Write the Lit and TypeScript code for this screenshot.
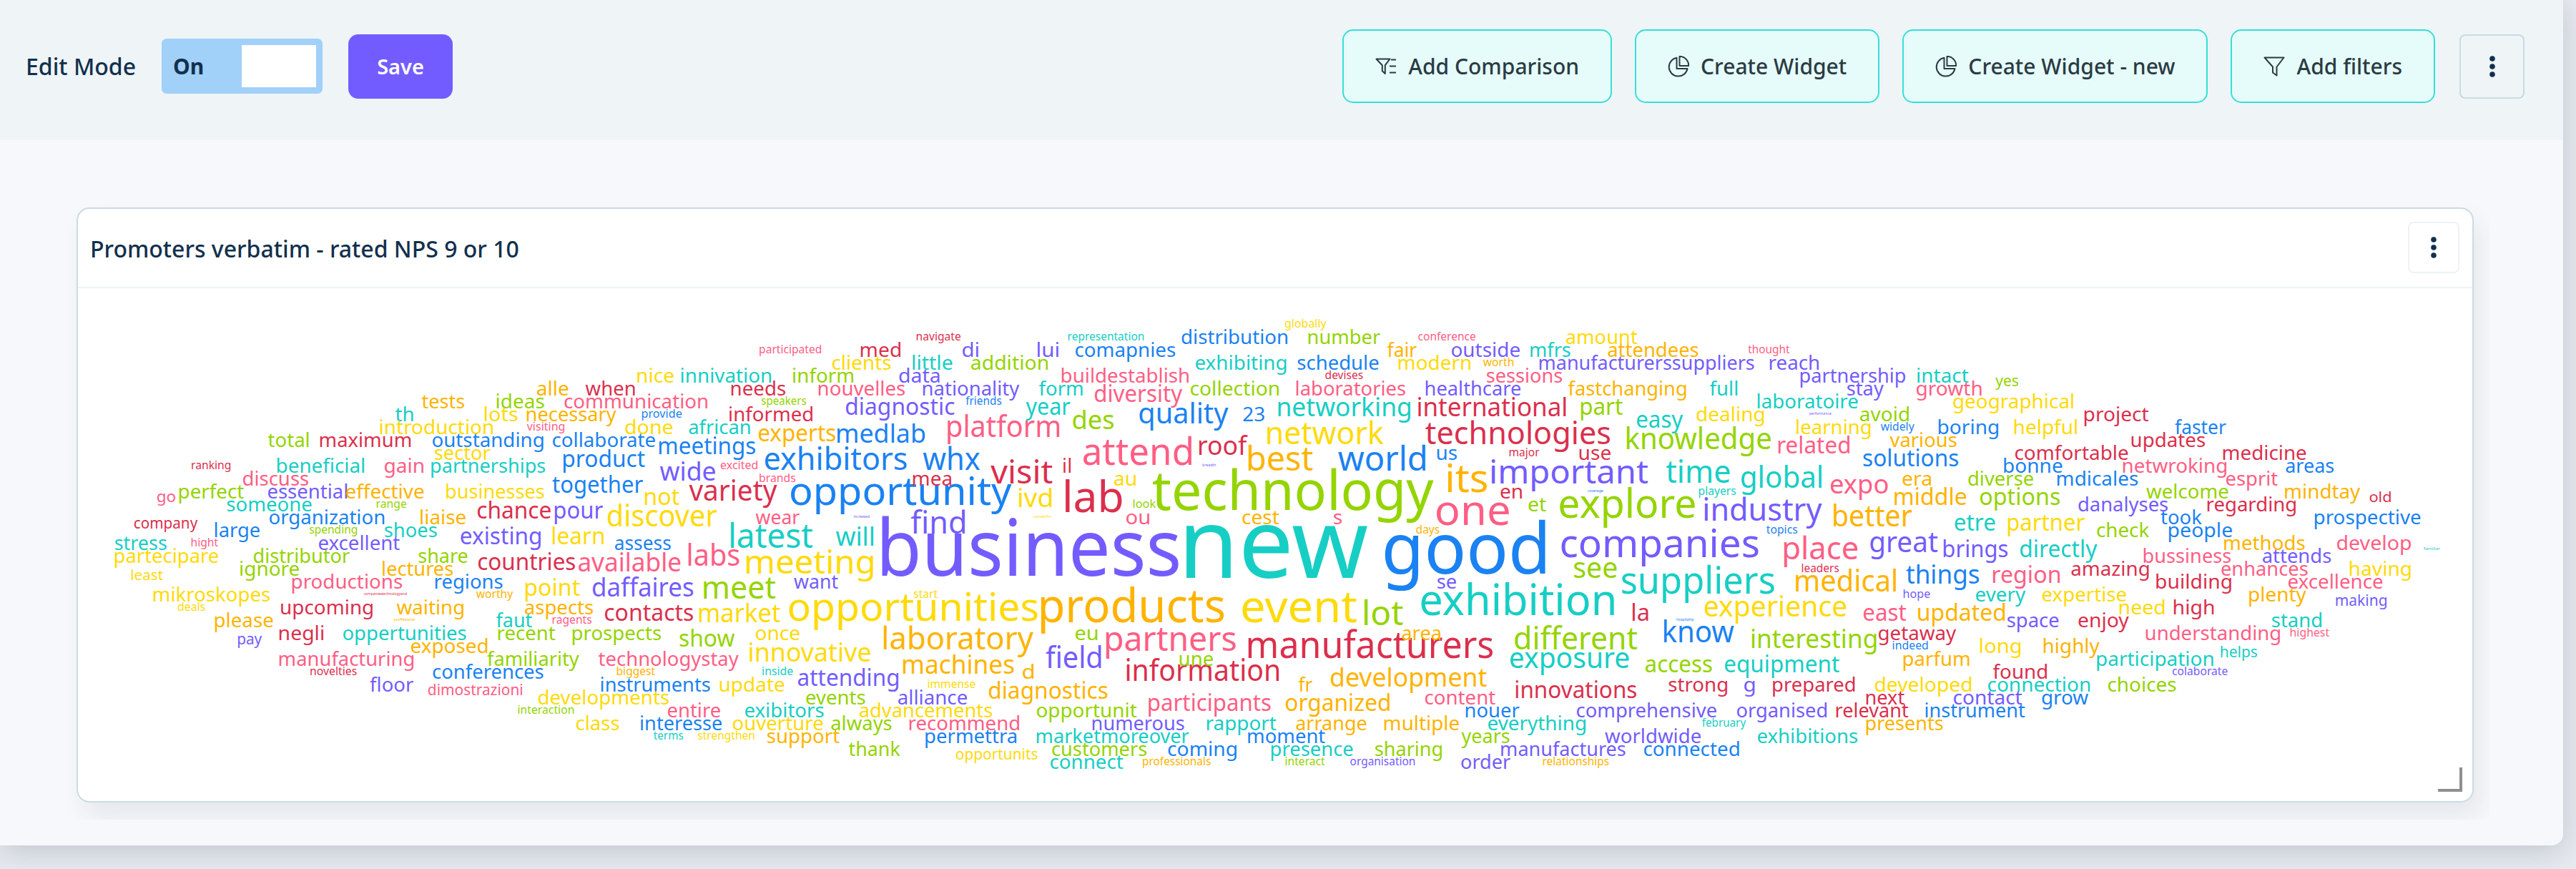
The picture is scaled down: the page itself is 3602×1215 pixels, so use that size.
import { LitElement, css, html, svg } from "lit";
import { customElement, property } from "lit/decorators.js";

// text, left edge, right edge, baseline, font size, colour key
type Word = [string, number, number, number, number, string];

const COLORS: Record<string, string> = {
  p: '#735cff',
  k: '#ff5e85',
  t: '#17cec4',
  y: '#ffda0a',
  o: '#ffb300',
  g: '#94d400',
  b: '#1a82f2',
  r: '#db2f4d',
};

const WORDS: Word[] = [
  ['new', 1659, 1912, 807.5, 135, 't'],
  ['business', 1234, 1647.5, 805.3, 109, 'p'],
  ['good', 1937, 2161, 801.7, 98, 'b'],
  ['technology', 1612, 2004, 713.3, 77, 'g'],
  ['products', 1456, 1711, 870.3, 66, 'o'],
  ['event', 1737.5, 1897.5, 870.3, 62, 'y'],
  ['exhibition', 1987.5, 2256.5, 860.3, 61, 't'],
  ['lab', 1490, 1568.5, 716, 60, 'r'],
  ['one', 2009, 2110, 734, 58, 'k'],
  ['explore', 2181.5, 2370, 724.3, 57, 'g'],
  ['opportunity', 1106, 1414, 706.3, 55, 'b'],
  ['opportunities', 1103.5, 1450.5, 868.3, 55, 'y'],
  ['its', 2025, 2079, 688.3, 55, 'o'],
  ['companies', 2183.5, 2458.5, 778.7, 55, 'p'],
  ['attend', 1515, 1666, 650.3, 52, 'k'],
  ['manufacturers', 1746, 2087, 920.3, 52, 'r'],
  ['suppliers', 2268, 2480.5, 830.3, 52, 't'],
  ['latest', 1022, 1136.5, 766.3, 48, 't'],
  ['best', 1746, 1836, 658.3, 48, 'o'],
  ['world', 1871.5, 1993, 658.3, 48, 'b'],
  ['lot', 1908, 1962, 874, 48, 'g'],
  ['partners', 1547, 1727.5, 910.3, 48, 'k'],
  ['visit', 1386, 1472, 676, 46, 'r'],
  ['important', 2086, 2304.5, 676, 46, 'p'],
  ['meeting', 1044, 1221, 802.3, 46, 'y'],
  ['network', 1772.5, 1934.5, 620.7, 44, 'y'],
  ['technologies', 1993.5, 2251, 620.7, 44, 'r'],
  ['exhibitors', 1070, 1267.5, 656.5, 44, 'b'],
  ['whx', 1291, 1370.5, 656.5, 44, 'b'],
  ['find', 1274, 1349, 746.3, 44, 'p'],
  ['laboratory', 1236, 1444.5, 908.3, 44, 'o'],
  ['different', 2118.5, 2289.5, 908.3, 44, 'g'],
  ['time', 2330, 2418.5, 674.7, 44, 't'],
  ['industry', 2384, 2547, 728.3, 44, 'p'],
  ['place', 2495, 2597.5, 782.3, 44, 'k'],
  ['meet', 984.5, 1084.5, 836.7, 44, 'g'],
  ['platform', 1325.5, 1481, 610.5, 41, 'k'],
  ['quality', 1593.5, 1717, 592.3, 40, 'b'],
  ['discover', 850, 1002.5, 736.3, 41, 'y'],
  ['labs', 963, 1033.5, 790.7, 41, 'k'],
  ['field', 1462.5, 1539.5, 934.3, 41, 'p'],
  ['information', 1576, 1788, 952.3, 41, 'r'],
  ['knowledge', 2275, 2476, 628.3, 41, 'g'],
  ['global', 2435, 2547, 682.3, 41, 't'],
  ['better', 2564.5, 2673.5, 736.3, 41, 'o'],
  ['medical', 2511.5, 2651, 826.7, 41, 'o'],
  ['know', 2327, 2424.5, 898.3, 41, 'b'],
  ['variety', 964, 1086, 700.3, 40, 'r'],
  ['exposure', 2112, 2277.5, 934.3, 40, 't'],
  ['great', 2615.5, 2709.5, 772.3, 40, 'p'],
  ['see', 2201, 2260.5, 808.3, 40, 'g'],
  ['experience', 2384, 2581.5, 862.3, 40, 'y'],
  ['will', 1169, 1221, 762.7, 37, 't'],
  ['available', 809, 951.5, 799, 36, 'k'],
  ['daffaires', 829, 969, 834, 36, 'p'],
  ['medlab', 1171, 1293, 619, 36, 'b'],
  ['wide', 923, 1000, 672.3, 36, 'p'],
  ['ivd', 1425, 1470.5, 708.5, 36, 'y'],
  ['market', 978, 1091, 870, 36, 'y'],
  ['innovative', 1048.5, 1217, 924.7, 36, 'y'],
  ['machines', 1263, 1417.5, 942.3, 36, 'o'],
  ['networking', 1787.5, 1972, 582.3, 36, 't'],
  ['international', 1983.5, 2189.5, 582.3, 36, 'r'],
  ['des', 1500.5, 1557, 600.3, 36, 'g'],
  ['roof', 1677, 1743, 636, 36, 'r'],
  ['development', 1861, 2079, 960.3, 36, 'o'],
  ['expo', 2560, 2639.5, 690.3, 36, 'k'],
  ['things', 2665.5, 2767, 816.3, 36, 'b'],
  ['interesting', 2450, 2623.5, 906.3, 36, 'g'],

  ['product', 788, 902, 652.5, 32, 'b'],
  ['together', 772.5, 899, 688.5, 32, 'b'],
  ['chance', 668, 770, 724.5, 32, 'r'],
  ['pour', 776, 843, 724.5, 32, 'p'],
  ['existing', 644.5, 756, 760.7, 32, 'p'],
  ['learn', 773, 844, 760.7, 32, 'y'],
  ['countries', 669, 804, 796.5, 32, 'r'],
  ['point', 735, 811, 832.7, 32, 'y'],
  ['diagnostic', 1183, 1334, 580.3, 32, 'p'],
  ['year', 1435, 1496.5, 580.3, 32, 't'],
  ['experts', 1061, 1168, 616.7, 32, 'o'],
  ['meetings', 922, 1056, 634.5, 32, 'b'],
  ['not', 902, 950, 706.3, 32, 'y'],
  ['contacts', 846, 969, 868.3, 32, 'r'],
  ['show', 950.5, 1027, 904.3, 32, 'g'],
  ['attending', 1116, 1256, 958.5, 32, 'p'],
  ['diagnostics', 1383, 1548.5, 976.5, 32, 'o'],
  ['diversity', 1531, 1653, 562.3, 32, 'k'],
  ['part', 2211, 2269, 580.3, 32, 'g'],
  ['participants', 1606.5, 1776.5, 994.3, 32, 'k'],
  ['organized', 1798, 1943, 994.3, 32, 'o'],
  ['innovations', 2120, 2288, 976.3, 32, 'r'],
  ['easy', 2289, 2353, 598.3, 32, 't'],
  ['related', 2487, 2586, 634.3, 32, 'k'],
  ['solutions', 2605.5, 2738, 652.3, 32, 'b'],
  ['middle', 2649.5, 2749.5, 706.3, 32, 'o'],
  ['options', 2769, 2880, 706.3, 32, 'g'],
  ['etre', 2733.5, 2789.5, 742.3, 32, 't'],
  ['partner', 2808, 2915, 742.3, 32, 'y'],
  ['brings', 2718, 2807, 778.7, 32, 'p'],
  ['directly', 2825, 2932, 778.7, 32, 't'],
  ['region', 2787, 2880, 814.5, 32, 'k'],
  ['la', 2283, 2304.5, 868.3, 32, 'r'],
  ['east', 2606, 2665.5, 868.3, 32, 'k'],
  ['updated', 2682.5, 2803.5, 868.3, 32, 'o'],
  ['access', 2301, 2393.5, 940.3, 32, 'g'],
  ['equipment', 2412, 2572, 940.3, 32, 't'],

  ['distribution', 1652.5, 1800, 481, 28, 'b'],
  ['number', 1830, 1930, 481, 28, 'g'],
  ['amount', 2190, 2289.5, 481, 28, 'y'],

  ['med', 1204, 1259, 499, 28, 'r'],
  ['di', 1346, 1368, 499, 28, 'p'],
  ['lui', 1451, 1480, 499, 28, 'p'],
  ['comapnies', 1504, 1643, 499, 28, 'b'],
  ['fair', 1940, 1981, 499, 28, 'o'],
  ['outside', 2030, 2125, 499, 28, 'p'],
  ['mfrs', 2140.5, 2195.5, 499, 28, 't'],
  ['attendees', 2248.5, 2374.5, 499, 28, 'o'],

  ['clients', 1164, 1245.5, 517, 28, 'y'],
  ['little', 1276.5, 1331.5, 517, 28, 't'],
  ['addition', 1358, 1465, 517, 28, 'g'],
  ['exhibiting', 1672, 1798.5, 517, 28, 't'],
  ['schedule', 1814.5, 1927.5, 517, 28, 'b'],
  ['modern', 1956, 2056, 517, 28, 'y'],
  ['manufacturerssuppliers', 2153, 2452.5, 517, 28, 'p'],
  ['reach', 2475, 2543, 517, 28, 'p'],

  ['nice', 891.5, 942, 535, 28, 'y'],
  ['innivation', 953, 1078, 535, 28, 't'],
  ['inform', 1109.5, 1193, 535, 28, 'g'],
  ['data', 1257.5, 1313.5, 535, 28, 'p'],
  ['buildestablish', 1485, 1662, 535, 28, 'k'],
  ['sessions', 2079, 2184, 535, 28, 'k'],
  ['partnership', 2518, 2664, 535, 28, 'p'],
  ['intact', 2681.5, 2752.5, 535, 28, 't'],

  ['alle', 751, 794.5, 553, 28, 'o'],
  ['when', 819, 887.5, 553, 28, 'r'],
  ['needs', 1023, 1098, 553, 28, 'r'],
  ['nouvelles', 1145, 1265, 553, 28, 'k'],
  ['nationality', 1291, 1425, 553, 28, 'p'],
  ['form', 1453, 1513.5, 553, 28, 't'],
  ['collection', 1665, 1788, 553, 28, 'g'],
  ['laboratories', 1813, 1965, 553, 28, 'k'],
  ['healthcare', 1994, 2126, 553, 28, 'p'],
  ['fastchanging', 2193, 2357.5, 553, 28, 'o'],
  ['full', 2391, 2429, 553, 28, 't'],
  ['stay', 2583, 2633.5, 553, 28, 'p'],
  ['growth', 2680, 2770.5, 553, 28, 'k'],

  ['tests', 590, 649, 571, 28, 'o'],
  ['ideas', 695, 760.5, 571, 28, 'g'],
  ['communication', 789.5, 989, 571, 28, 'k'],
  ['laboratoire', 2458, 2597.5, 571, 28, 't'],
  ['geographical', 2731.5, 2899, 571, 28, 'y'],

  ['th', 553, 577.5, 589, 28, 't'],
  ['lots', 678, 723.5, 589, 28, 'y'],
  ['necessary', 737, 861.5, 589, 28, 'o'],
  ['informed', 1020.5, 1136, 589, 28, 'r'],
  ['23', 1738.5, 1768, 589, 28, 'b'],
  ['dealing', 2372.5, 2466.5, 589, 28, 'y'],
  ['avoid', 2601, 2669, 589, 28, 'g'],
  ['project', 2915, 3004.5, 589, 28, 'r'],

  ['introduction', 532, 689, 607, 28, 'y'],
  ['done', 874.5, 940.5, 607, 28, 'y'],
  ['african', 963.5, 1048.5, 607, 28, 't'],
  ['learning', 2512.5, 2615.5, 607, 28, 'y'],
  ['boring', 2711, 2794, 607, 28, 'b'],
  ['helpful', 2817, 2904, 607, 28, 'y'],
  ['faster', 3041.5, 3112.5, 607, 28, 'b'],

  ['total', 375, 431.5, 625, 28, 'g'],
  ['maximum', 448, 574, 625, 28, 'r'],
  ['outstanding', 605, 759.5, 625, 28, 'b'],
  ['collaborate', 773, 916, 625, 28, 'b'],
  ['various', 2643, 2735.5, 625, 28, 'o'],
  ['updates', 2981, 3083, 625, 28, 'r'],

  ['sector', 608, 685.5, 643, 28, 'y'],
  ['us', 2010, 2037, 643, 28, 'b'],
  ['use', 2209, 2252, 643, 28, 'r'],
  ['comfortable', 2818, 2975.5, 643, 28, 'r'],
  ['medicine', 3109, 3224.5, 643, 28, 'r'],

  ['beneficial', 388, 509, 661, 28, 't'],
  ['gain', 538, 592, 661, 28, 'k'],
  ['partnerships', 603.5, 762, 661, 28, 't'],
  ['il', 1487.5, 1497, 660.5, 28, 'r'],
  ['bonne', 2802.5, 2883.5, 661, 28, 'b'],
  ['netwroking', 2969, 3113, 661, 28, 'k'],
  ['areas', 3196.5, 3263, 661, 28, 'b'],

  ['discuss', 340, 431, 679, 28, 'k'],
  ['mea', 1277, 1330, 679, 28, 'r'],
  ['au', 1558, 1588, 679, 28, 'y'],
  ['era', 2660.5, 2700, 679, 28, 'o'],
  ['diverse', 2752.5, 2843, 679, 28, 'g'],
  ['mdicales', 2877, 2989, 679, 28, 'b'],
  ['esprit', 3113, 3185, 679, 28, 'k'],

  ['perfect', 251, 341, 697, 28, 'g'],
  ['essential', 375, 485, 697, 28, 'p'],
  ['effective', 484, 592.5, 697, 28, 'o'],
  ['businesses', 624.5, 760.5, 697, 28, 'y'],
  ['en', 2098.5, 2128, 697, 28, 'r'],
  ['welcome', 3001.5, 3115.5, 697, 28, 'g'],
  ['mindtay', 3195.5, 3300, 697, 28, 'o'],

  ['someone', 317.5, 435.5, 715, 28, 't'],
  ['et', 2137.5, 2162, 715, 28, 'g'],
  ['danalyses', 2906.5, 3031, 715, 28, 'p'],
  ['regarding', 3087, 3210, 715, 28, 'r'],

  ['organization', 377, 537, 733, 28, 'b'],
  ['liaise', 588.5, 651, 733, 28, 'o'],
  ['wear', 1057, 1118, 733, 28, 'k'],
  ['ou', 1575, 1607, 733, 28, 'k'],
  ['cest', 1737.5, 1788.5, 733, 28, 'o'],
  ['s', 1865, 1876, 733, 28, 'k'],
  ['took', 3021.5, 3078.5, 733, 28, 'b'],
  ['prospective', 3237, 3384.5, 733, 28, 'b'],

  ['large', 301, 363, 751, 28, 'b'],
  ['shoes', 538, 610.5, 751, 28, 't'],
  ['check', 2932.5, 3005, 751, 28, 'g'],
  ['people', 3033, 3121, 751, 28, 'b'],

  ['stress', 161, 232.5, 769, 28, 't'],
  ['excellent', 446, 559, 769, 28, 'p'],
  ['assess', 860, 937.5, 769, 28, 'b'],
  ['methods', 3110.5, 3222.5, 769, 28, 'o'],
  ['develop', 3268, 3371, 769, 28, 'k'],

  ['partecipare', 161, 305, 787, 28, 'y'],
  ['distributor', 355, 489, 787, 28, 'g'],
  ['share', 585.5, 653.5, 787, 28, 'g'],
  ['bussiness', 2998, 3119, 787, 28, 'k'],
  ['attends', 3164, 3259, 787, 28, 'p'],

  ['ignore', 336.5, 418, 805, 28, 'g'],
  ['lectures', 535.5, 633, 805, 28, 'o'],
  ['amazing', 2896.5, 3004.5, 805, 28, 'r'],
  ['enhances', 3106.5, 3226.5, 805, 28, 'k'],
  ['having', 3286, 3371, 805, 28, 'y'],

  ['productions', 409, 562, 823, 28, 'k'],
  ['regions', 609, 702.5, 823, 28, 'b'],
  ['want', 1110.5, 1172, 823, 28, 'p'],
  ['se', 2010, 2036, 823, 28, 'p'],
  ['building', 3015.5, 3120, 823, 28, 'r'],
  ['excellence', 3200, 3331.5, 823, 28, 'k'],

  ['mikroskopes', 215, 377, 841, 28, 'y'],
  ['every', 2763, 2832, 841, 28, 't'],
  ['expertise', 2856, 2973, 841, 28, 'y'],
  ['plenty', 3145.5, 3224.5, 841, 28, 'o'],

  ['upcoming', 393.5, 521, 859, 28, 'r'],
  ['waiting', 555, 648, 859, 28, 'o'],
  ['aspects', 734, 829, 859, 28, 'o'],
  ['need', 2964, 3026.5, 859, 28, 'y'],
  ['high', 3040, 3095.5, 859, 28, 'r'],

  ['please', 301, 381.5, 877, 28, 'o'],
  ['faut', 694, 744, 877, 28, 't'],
  ['space', 2807, 2878.5, 877, 28, 'p'],
  ['enjoy', 2906.5, 2976.5, 877, 28, 'r'],
  ['stand', 3177, 3246, 877, 28, 't'],

  ['negli', 391, 452, 895, 28, 'r'],
  ['oppertunities', 480, 651.5, 895, 28, 't'],
  ['recent', 697, 776.5, 895, 28, 'g'],
  ['prospects', 801, 924, 895, 28, 'g'],
  ['once', 1057, 1118, 895, 28, 'y'],
  ['eu', 1504, 1534.5, 895, 28, 'g'],
  ['area', 1960.5, 2014, 895, 28, 'o'],
  ['getaway', 2627, 2735, 895, 28, 'r'],
  ['understanding', 3001, 3188, 895, 28, 'k'],

  ['exposed', 575, 681.5, 913, 28, 'o'],
  ['long', 2769, 2825.5, 913, 28, 'y'],
  ['highly', 2858, 2935.5, 913, 28, 'o'],

  ['manufacturing', 391, 578, 931, 28, 'k'],
  ['familiarity', 681.5, 809.5, 931, 28, 'g'],
  ['technologystay', 837, 1032.5, 931, 28, 'k'],
  ['une', 1650, 1696, 931, 28, 'g'],
  ['parfum', 2662, 2753.5, 931, 28, 'o'],
  ['participation', 2932.5, 3094.5, 931, 28, 't'],

  ['conferences', 605.5, 759.5, 949, 28, 'b'],
  ['d', 1430, 1445.5, 949, 28, 'o'],
  ['found', 2787, 2862, 949, 28, 'r'],

  ['floor', 517.5, 578, 967, 28, 'p'],
  ['instruments', 841, 992.5, 967, 28, 'b'],
  ['update', 1007, 1096.5, 967, 28, 'y'],
  ['fr', 1816, 1835, 967, 28, 'o'],
  ['strong', 2333.5, 2415, 967, 28, 'r'],
  ['g', 2439, 2453.5, 967, 28, 'p'],
  ['prepared', 2479.5, 2593.5, 967, 28, 'r'],
  ['developed', 2622, 2756.5, 967, 28, 'y'],
  ['connection', 2780, 2922, 967, 28, 't'],
  ['choices', 2948, 3042.5, 967, 28, 'g'],

  ['developments', 753, 935, 985, 28, 'y'],
  ['events', 1127.5, 1209.5, 985, 28, 'g'],
  ['alliance', 1256, 1352, 985, 28, 'p'],
  ['content', 1993, 2091, 985, 28, 'k'],
  ['next', 2610, 2663, 985, 28, 'r'],
  ['contact', 2732, 2827.5, 985, 28, 'p'],
  ['grow', 2855.5, 2920, 985, 28, 'b'],

  ['entire', 934, 1007, 1003, 28, 'k'],
  ['exibitors', 1042, 1151.5, 1003, 28, 't'],
  ['advancements', 1202, 1387, 1003, 28, 'y'],
  ['opportunit', 1450, 1589.5, 1003, 28, 'g'],
  ['nouer', 2050, 2124.5, 1003, 28, 'b'],
  ['comprehensive', 2205, 2400, 1003, 28, 'p'],
  ['organised', 2429, 2554, 1003, 28, 'p'],
  ['relevant', 2568, 2668.5, 1003, 28, 'r'],
  ['instrument', 2693, 2831.5, 1003, 28, 'b'],

  ['class', 806, 865.5, 1021, 28, 'y'],
  ['interesse', 896.5, 1009, 1021, 28, 'b'],
  ['ouverture', 1025, 1150.5, 1021, 28, 'y'],
  ['always', 1162.5, 1246.5, 1021, 28, 'g'],
  ['recommend', 1272, 1425, 1021, 28, 'k'],
  ['numerous', 1528, 1655.5, 1021, 28, 'p'],
  ['rapport', 1688, 1784.5, 1021, 28, 't'],
  ['arrange', 1812.5, 1910.5, 1021, 28, 'o'],
  ['multiple', 1936, 2040, 1021, 28, 'o'],
  ['everything', 2081, 2217, 1021, 28, 't'],
  ['presents', 2610, 2716.5, 1021, 28, 'o'],

  ['support', 1073, 1174, 1039, 28, 'o'],
  ['permettra', 1294.5, 1421, 1039, 28, 'b'],
  ['marketmoreover', 1450, 1662.5, 1039, 28, 't'],
  ['moment', 1745.5, 1853, 1039, 28, 'b'],
  ['years', 2044, 2110.5, 1039, 28, 'g'],
  ['worldwide', 2244.5, 2378, 1039, 28, 'p'],
  ['exhibitions', 2458, 2597, 1039, 28, 't'],

  ['thank', 1187, 1258.5, 1057, 28, 'g'],
  ['customers', 1471.5, 1603, 1057, 28, 'g'],
  ['coming', 1633.5, 1729, 1057, 28, 'b'],
  ['presence', 1778, 1891.5, 1057, 28, 't'],
  ['sharing', 1923, 2016, 1057, 28, 'g'],
  ['manufactures', 2099.5, 2272.5, 1057, 28, 'p'],
  ['connected', 2299, 2431.5, 1057, 28, 'b'],

  ['connect', 1469, 1570.5, 1075, 28, 't'],
  ['order', 2043.5, 2112, 1075, 28, 'p'],

  ['yes', 2790.5, 2822, 540.3, 22, 'g'],
  ['go', 220, 245, 702.3, 22, 'k'],
  ['company', 188, 276, 738.7, 22, 'r'],
  ['least', 184, 228, 810.5, 20, 'y'],
  ['pay', 333, 366, 901, 22, 'p'],
  ['dimostrazioni', 599, 730, 972.3, 21, 'k'],
  ['opportunits', 1337, 1450.5, 1062.3, 21, 'y'],
  ['old', 3313.5, 3343, 702.3, 20, 'r'],
  ['making', 3266.5, 3337, 847, 21, 'p'],
  ['helps', 3105.5, 3156, 919, 21, 't'],

  ['globally', 1797, 1854.5, 457.7, 17, 'y'],
  ['navigate', 1282, 1343, 475.7, 17, 'r'],
  ['representation', 1494, 1599, 475.7, 17, 't'],
  ['conference', 1983.5, 2063, 475.7, 17, 'k'],
  ['participated', 1062.5, 1148, 493.7, 17, 'k'],
  ['thought', 2444.5, 2502.5, 493.7, 17, 'k'],
  ['worth', 2074, 2116, 511.7, 17, 'o'],
  ['devises', 1853.5, 1905.5, 529.7, 17, 'r'],
  ['speakers', 1065, 1127, 565.7, 17, 'g'],
  ['friends', 1350.5, 1400, 565.7, 17, 'b'],
  ['provide', 898, 953, 583.7, 17, 'b'],
  ['visiting', 737, 789, 601.7, 17, 'k'],
  ['widely', 2630, 2676.5, 601.7, 17, 'b'],
  ['major', 2111, 2152.5, 637.7, 17, 'r'],
  ['ranking', 268.5, 322, 656, 17, 'r'],
  ['excited', 1008, 1059, 655.7, 17, 'k'],
  ['brands', 1062.5, 1112, 673.7, 17, 'k'],
  ['players', 2376, 2427, 691.7, 17, 't'],
  ['range', 527, 568, 709.7, 17, 'g'],
  ['look', 1585, 1616, 709.5, 17, 'g'],
  ['spending', 433, 499, 745.7, 17, 'g'],
  ['days', 1980.5, 2012.5, 745.5, 17, 'o'],
  ['topics', 2470, 2513, 745.7, 17, 'b'],
  ['hight', 268, 305, 763.7, 17, 'k'],
  ['leaders', 2520, 2571, 799.5, 17, 'r'],
  ['worthy', 666, 717, 835.7, 17, 'o'],
  ['start', 1278, 1311, 835.7, 17, 'y'],
  ['hope', 2662, 2698.5, 835.7, 17, 'p'],
  ['deals', 249, 286.5, 853.7, 17, 'y'],
  ['ragents', 773, 827, 871.7, 17, 'k'],
  ['highest', 3203, 3257, 889.7, 17, 'k'],
  ['indeed', 2647, 2695.5, 907.7, 17, 'b'],
  ['novelties', 434.5, 498.5, 943.7, 17, 'r'],
  ['biggest', 863, 916, 943.7, 17, 'o'],
  ['inside', 1066.5, 1108.5, 943.7, 17, 't'],
  ['colaborate', 3038, 3114.5, 943.7, 17, 'p'],
  ['immense', 1298, 1363.5, 961.7, 17, 'y'],
  ['interaction', 725, 802, 997.7, 17, 'g'],
  ['february', 2380, 2441, 1015.7, 17, 't'],
  ['terms', 914, 955, 1033.7, 17, 't'],
  ['strengthen', 976, 1054.5, 1033.7, 17, 'y'],
  ['professionals', 1598.5, 1692.5, 1069.7, 17, 'o'],
  ['interact', 1798, 1852.5, 1069.7, 17, 'g'],
  ['organisation', 1888.5, 1978, 1069.7, 17, 'p'],
  ['relationships', 2158, 2249.5, 1069.7, 17, 'o'],

  ['performance', 2530.5, 2560.5, 580.3, 6, 'p'],
  ['breadth', 1681.5, 1700, 652.3, 6, 'p'],
  ['coverage', 2220, 2241.5, 688.3, 6, 'b'],
  ['increased', 1194, 1215.5, 724.3, 6, 'p'],
  ['wonderful', 1445, 1469, 724.3, 6, 'y'],
  ['familiar', 3389, 3412, 769, 6, 't'],
  ['companiestechnologyand', 509, 568.5, 832.3, 6, 'r'],
  ['proffesional', 551, 580, 868.3, 6, 'o'],
  ['hospitality', 2344.5, 2368.5, 868.3, 6, 'b'],
];

// blank space the font leaves before and after a letter, in em
function leftBearing(letter: string) {
  if ('bhiklmnpru'.includes(letter)) return 0.085;
  if ('cdegoq'.includes(letter)) return 0.055;
  if ('as23'.includes(letter)) return 0.045;
  return 0.015;
}

function rightBearing(letter: string) {
  if ('adghilmnqu'.includes(letter)) return 0.08;
  if ('bop'.includes(letter)) return 0.055;
  if ('ces23'.includes(letter)) return 0.045;
  return 0.01;
}

@customElement('word-cloud')
export class WordCloud extends LitElement {
  @property({ attribute: false }) words: Word[] = [];

  private renderWord([text, left, right, y, size, color]: Word) {
    const before = leftBearing(text[0]) * size;
    const after = rightBearing(text[text.length - 1]) * size;
    return svg`
      <text
        x=${left - before}
        y=${y}
        font-size=${size}
        fill=${COLORS[color]}
        textLength=${right - left + before + after}
        lengthAdjust="spacingAndGlyphs"
      >${text}</text>
    `;
  }

  protected render(): unknown {
    return html`
      <svg viewBox="109 403 3348 717" width="3348" height="717">
        ${this.words.map(word => this.renderWord(word))}
      </svg>
    `;
  }

  static styles = css`
    :host {
      display: block;
      font-weight: 400;
    }

    svg {
      display: block;
    }

    text {
      font-family: "Noto Sans", "Open Sans", sans-serif;
    }
  `;
}

const filterListIcon = svg`
  <path d="M1.5 4.5H20.5L13.8 13.2V25L9.8 21.2V13.2Z" />
  <path d="M22 5.5H29M20 14.5H29M20 23.5H29" />
`;

const pieIcon = svg`
  <path d="M12.5 2.8A13 13 0 1 0 27.5 18H12.5Z" />
  <path d="M16.5 .8V14H29.3A13 13 0 0 0 16.5 .8Z" />
`;

const filterIcon = svg`
  <path d="M1.5 2.5H28.5L18.5 15.5V27.5L13 23.5V15.5Z" />
`;

const dots = svg`
  <circle cx="6" cy="4" r="3.8" />
  <circle cx="6" cy="15" r="3.8" />
  <circle cx="6" cy="26" r="3.8" />
`;

@customElement('app-root')
export class AppRoot extends LitElement {
  private renderAction(icon: unknown, label: string) {
    return html`
      <button class="action">
        <svg class="icon" viewBox="0 0 30 30">${icon}</svg>
        <span>${label}</span>
      </button>
    `;
  }

  protected render(): unknown {
    return html`
      <div class="panel">
        <header class="toolbar">
          <span class="label">Edit Mode</span>
          <div class="toggle">
            <span>On</span>
            <i></i>
          </div>
          <button class="save">Save</button>
          <div class="actions">
            ${this.renderAction(filterListIcon, 'Add Comparison')}
            ${this.renderAction(pieIcon, 'Create Widget')}
            ${this.renderAction(pieIcon, 'Create Widget - new')}
            ${this.renderAction(filterIcon, 'Add filters')}
            <button class="menu">
              <svg viewBox="0 0 12 30">${dots}</svg>
            </button>
          </div>
        </header>
        <main class="board">
          <section class="card">
            <div class="card-header">
              <h2>Promoters verbatim - rated NPS 9 or 10</h2>
              <button class="menu card-menu">
                <svg viewBox="0 0 12 30">${dots}</svg>
              </button>
            </div>
            <word-cloud .words=${WORDS}></word-cloud>
            <span class="resize"></span>
          </section>
        </main>
      </div>
    `;
  }

  static styles = css`
    :host {
      display: block;
      height: 1215px;
      overflow: hidden;
      background: #e7ebf0;
      color: #12304d;
      font-family: "Noto Sans", "Open Sans", sans-serif;
      font-size: 30px;
      font-weight: 500;
    }

    * {
      box-sizing: border-box;
    }

    button {
      font: inherit;
      color: inherit;
      margin: 0;
      padding: 0;
      flex: none;
    }

    .panel {
      width: 3584px;
      height: 1182px;
      background: #f7f8fb;
      border-bottom-right-radius: 16px;
      box-shadow: 0 8px 40px rgba(40, 50, 75, 0.2);
      overflow: hidden;
    }

    .toolbar {
      display: flex;
      align-items: center;
      height: 196px;
      padding: 0 54px 11px 36px;
      background: #eff4f7;
    }

    .label {
      width: 190px;
      font-size: 32px;
      white-space: nowrap;
    }

    .toggle {
      display: flex;
      align-items: center;
      justify-content: space-between;
      width: 225px;
      height: 77px;
      padding: 0 9px 0 16px;
      border-radius: 7px;
      background: #a1d0f8;
      font-weight: 700;
    }

    .toggle i {
      width: 104px;
      height: 59px;
      background: #fff;
    }

    .save {
      width: 146px;
      height: 90px;
      margin-left: 36px;
      border: 0;
      border-radius: 14px;
      background: #735cff;
      color: #fff;
      font-weight: 600;
      font-size: 29px;
    }

    .actions {
      display: flex;
      align-items: center;
      gap: 32px;
      margin-left: auto;
    }

    .action {
      display: flex;
      align-items: center;
      gap: 16px;
      height: 103px;
      padding: 0 44px;
      border: 2px solid #35e0d8;
      border-radius: 15px;
      background: #e6fcfa;
      color: #2a3b43;
      white-space: nowrap;
    }

    .icon {
      width: 30px;
      height: 30px;
      fill: none;
      stroke: currentColor;
      stroke-width: 2;
      stroke-linejoin: round;
    }

    .menu {
      display: flex;
      align-items: center;
      justify-content: center;
      width: 91px;
      height: 90px;
      margin-left: 2px;
      border: 2px solid #c9dbe1;
      border-radius: 8px;
      background: none;
    }

    .menu svg {
      width: 12px;
      height: 30px;
      fill: #12304d;
    }

    .board {
      height: 950px;
      padding: 94px 0 0 107px;
      width: 3481px;
      overflow: hidden;
    }

    .card {
      position: relative;
      width: 3352px;
      height: 832px;
      border: 2px solid #cbdce3;
      border-radius: 18px;
      background: #fff;
      box-shadow: 10px 20px 32px rgba(30, 45, 80, 0.08);
    }

    .card-header {
      display: flex;
      align-items: center;
      justify-content: space-between;
      height: 111px;
      padding: 0 18px 2px 17px;
      border-bottom: 2px solid #eef3f6;
    }

    h2 {
      margin: 0;
      padding-top: 3px;
      font-size: 32px;
      font-weight: 500;
    }

    .card-menu {
      width: 72px;
      height: 72px;
      border-color: #eef1f7;
    }

    .resize {
      position: absolute;
      right: 14px;
      bottom: 13px;
      width: 34px;
      height: 34px;
      border-right: 4px solid #8f8f8f;
      border-bottom: 4px solid #8f8f8f;
    }
  `;
}

declare global {
  interface HTMLElementTagNameMap {
    'word-cloud': WordCloud
    'app-root': AppRoot
  }
}
